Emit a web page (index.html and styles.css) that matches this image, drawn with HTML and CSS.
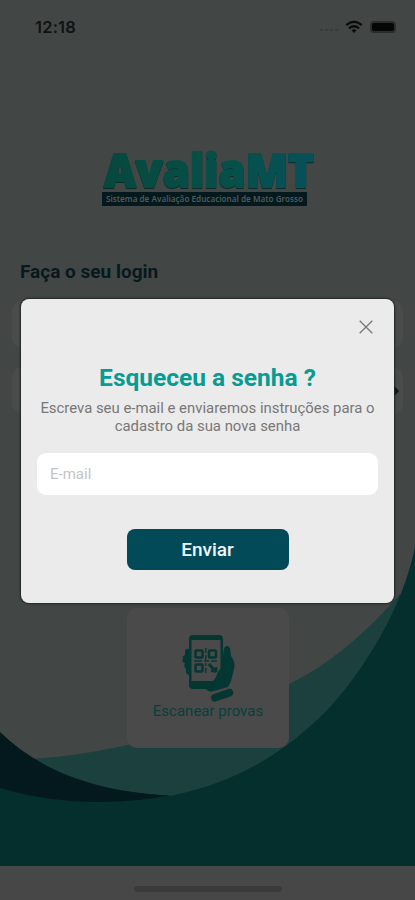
FILE: index.html
```html
<!DOCTYPE html>
<html lang="pt-BR">
<head>
<meta charset="utf-8">
<meta name="viewport" content="width=device-width, initial-scale=1">
<title>AvaliaMT</title>
<link rel="stylesheet" href="styles.css">
</head>
<body>
<div class="screen">
  <svg class="waves" viewBox="0 0 415 866" aria-hidden="true">
    <path fill="#1b403e" d="M30 759C65 757 95 752 128 745C185 730 240 710 289 684C330 664 365 634 400 594V800H100Z"/>
    <path fill="#042f2d" d="M415 547C402 610 364 669 331 706C289 750 240 782 170 796L0 780V866H415Z"/>
    <path fill="#03191d" d="M0 732C41 772 98 792 170 795.500C115 806 53 804 0 788Z"/>
  </svg>
  <header class="status">
    <span class="time">12:18</span>
    <div class="indicators">
      <span class="signal"><i></i><i></i><i></i><i></i></span>
      <svg width="18" height="14" viewBox="0 0 18 14" fill="none" stroke="#0b0d0d" stroke-width="2.300">
        <path d="M1.200 5.200Q9-1.600 16.800 5.200M4 8.300Q9 4.100 14 8.300"/>
        <path fill="#0b0d0d" stroke="none" d="M6.500 10.200Q9 8.300 11.500 10.200L9 13Z"/>
      </svg>
      <span class="battery"></span>
    </div>
  </header>
  <div class="brand">
    <svg width="220" height="60" viewBox="0 0 220 60">
      <defs><linearGradient id="brand-fill" x1="0" x2="1" y1="0" y2="0">
        <stop offset="0" stop-color="#07483d"/><stop offset=".6" stop-color="#06504a"/><stop offset="1" stop-color="#07505a"/>
      </linearGradient></defs>
      <text class="wordmark" x="4" y="38" textLength="210" lengthAdjust="spacingAndGlyphs" fill="url(#brand-fill)" stroke="url(#brand-fill)">AvaliaMT</text>
      <rect x="2" y="43" width="205" height="14" fill="#04191d"/>
      <text class="tagline" x="6" y="52.500" textLength="197" lengthAdjust="spacingAndGlyphs">Sistema de Avaliação Educacional de Mato Grosso</text>
    </svg>
  </div>
  <h2 class="login-title">Faça o seu login</h2>
  <div class="login-fields">
    <div class="login-field"></div>
    <div class="login-field">
      <svg width="20" height="16" viewBox="0 0 20 16" fill="#141717"><path d="M0 8Q10-5 20 8Q10 21 0 8Z"/></svg>
    </div>
  </div>
  <div class="scan">
    <svg width="54" height="68" viewBox="0 0 54 68" fill="#043632">
      <path fill-rule="evenodd" d="M12 1H38Q42 1 42 5V46L33 57H27L25 55H12Q8 55 8 51V5Q8 1 12 1ZM10.500 6V47H32L39.500 38V6Z"/>
      <path d="M8 15Q4 14 4 18V21Q1 22 2 25Q0 28 4 29Q2 32 5 35Q4 40 8 41Z"/>
      <path d="M42 22L43 14Q46 10 49 14L50 22Q55 29 53 35L50 47L47 53L29 58Q27 54 32 49L35 43Q36 38 40 34Z"/>
      <rect x="29" y="57" width="24" height="8.500" rx="4" transform="rotate(-19 41 61)" stroke="#4a4a4a"/>
      <g fill="none" stroke="#043632" stroke-width="2.500"><rect x="14.500" y="16.500" width="7" height="7" rx="1"/><rect x="28" y="16.500" width="7" height="7" rx="1"/><rect x="14.500" y="30.500" width="7" height="7" rx="1"/><path stroke-width="1.400" d="M24.800 14V19M24.800 21V26M13 27H21M23 27H28M30 27H36M24.800 29V32M24.800 34V39"/><path stroke-width="3" d="M28 30L35 38"/><path d="M30 37H35V33"/></g>
    </svg>
    <span>Escanear provas</span>
  </div>
  <footer class="home"><span></span></footer>

  <div class="overlay">
    <section class="dialog" role="dialog" aria-labelledby="dialog-title">
      <button class="close" aria-label="Fechar"><svg width="14" height="14" viewBox="0 0 14 14" fill="none" stroke="#777" stroke-width="1.300"><path d="M.7.7L13.300 13.300M13.300.7L.7 13.300"/></svg></button>
      <h1 id="dialog-title">Esqueceu a senha ?</h1>
      <p>Escreva seu e-mail e enviaremos instruções para o<br>cadastro da sua nova senha</p>
      <input type="email" placeholder="E-mail">
      <button class="send">Enviar</button>
    </section>
  </div>
</div>
</body>
</html>
```
FILE: styles.css
```css
* { box-sizing: border-box; }
body { margin: 0; font-family: Roboto, "Liberation Sans", sans-serif; }
.screen { position: relative; width: 415px; height: 900px; overflow: hidden; display: flex; flex-direction: column; background: #424746; isolation: isolate; }
.waves { position: absolute; z-index: -1; inset: 0 auto auto 0; width: 415px; height: 866px; }

.status { height: 54px; padding: 0 19px 0 35px; display: flex; align-items: center; justify-content: space-between; }
.time { font: 600 16.500px/20px Inter, sans-serif; color: #101313; letter-spacing: .2px; }
.indicators { display: flex; align-items: center; gap: 7px; }
.signal { display: flex; gap: 2px; padding-top: 6px; }
.signal i { width: 3px; height: 2px; background: #383d3c; }
.battery { width: 26px; height: 12px; border: 2px solid #292d2d; border-radius: 4px; background: #050606; }

.brand { height: 60px; margin: 95px 0 0 100px; }
.brand svg { display: block; overflow: visible; }
.wordmark { font: 900 46px "Noto Sans", sans-serif; stroke-width: 2px; stroke-linejoin: round; filter: drop-shadow(0 1px 0 #092c2b); }
.tagline { font: 600 8px "Noto Sans", sans-serif; fill: #4c5b5c; }

.login-title { margin: 51px 0 0 20px; font-size: 19px; line-height: 23px; font-weight: 700; color: #07191d; }
.login-fields { display: grid; gap: 19px; margin: 18px 12px 0; }
.login-field { height: 47px; border-radius: 10px; background: #4a4b4b; display: flex; align-items: center; justify-content: flex-end; padding-right: 4px; }

.scan { width: 162px; height: 140px; margin: 194px 0 0 127px; padding-top: 26px; border-radius: 10px; background: #4a4a4a; display: flex; flex-direction: column; align-items: center; color: #07403b; font-size: 15px; line-height: 18px; }
.home { height: 34px; margin-top: auto; background: #474747; display: flex; justify-content: center; padding-top: 20px; }
.home span { width: 148px; height: 6px; border-radius: 3px; background: #3a3a3a; }

.overlay { position: absolute; inset: 0; padding: 299px 21px 0; }
.dialog { height: 304px; border-radius: 8px; background: #ebebeb; box-shadow: 0 0 2px 1px #222525; padding: 0 16px; display: flex; flex-direction: column; align-items: center; }
button { border: 0; padding: 0; font-family: inherit; }
.close { align-self: flex-end; width: 14px; height: 14px; margin: 21px 5px 0 0; background: none; }
.close svg { display: block; }
h1 { margin: 29px 0 0; font-size: 24.500px; line-height: 30px; font-weight: 700; color: #079b91; white-space: nowrap; }
p { margin: 6px -10px 0; font-size: 14.900px; line-height: 18px; color: #777; text-align: center; white-space: nowrap; }
input { width: 341px; height: 42px; margin-top: 18px; border: 0; border-radius: 9px; background: #fff; padding: 0 13px; font: 15px Roboto, sans-serif; flex: none; }
input::placeholder { color: #c4c4c4; opacity: 1; }
.send { width: 162px; height: 41px; margin-top: 34px; border-radius: 8px; background: #034a59; color: #eef8fa; font-size: 19px; font-weight: 500; }
```
